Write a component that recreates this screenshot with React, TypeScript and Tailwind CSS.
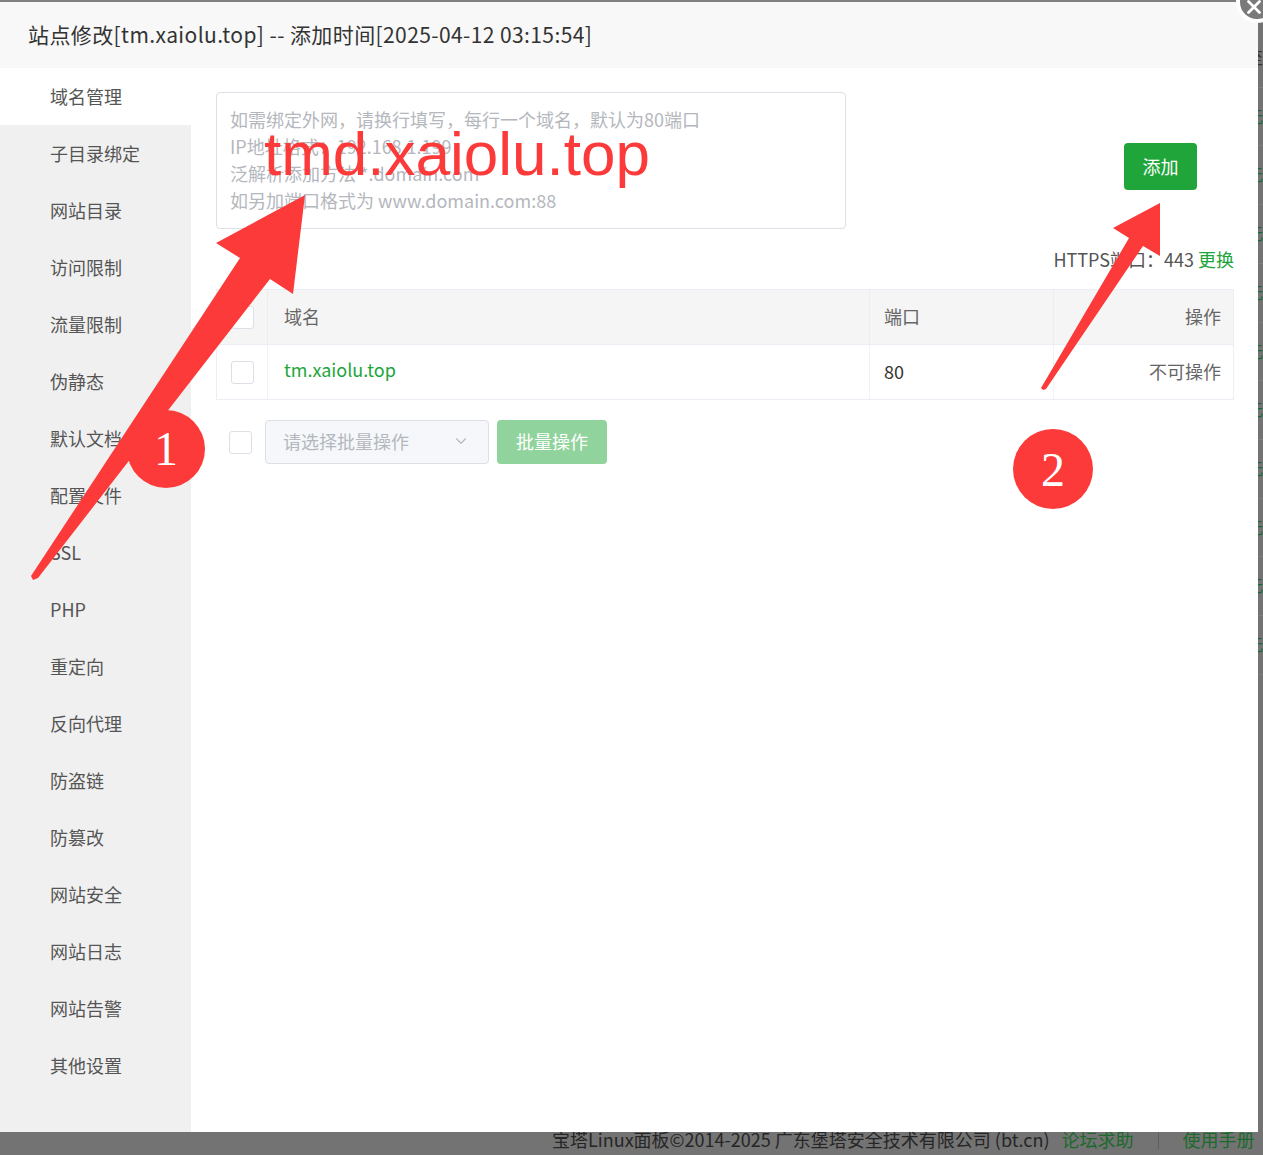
import React from "react";
import { ChevronDown, X } from "lucide-react";

const menu = [
  "域名管理",
  "子目录绑定",
  "网站目录",
  "访问限制",
  "流量限制",
  "伪静态",
  "默认文档",
  "配置文件",
  "SSL",
  "PHP",
  "重定向",
  "反向代理",
  "防盗链",
  "防篡改",
  "网站安全",
  "网站日志",
  "网站告警",
  "其他设置",
];

const hints = [
  "如需绑定外网，请换行填写，每行一个域名，默认为80端口",
  "IP地址格式：192.168.1.199",
  "泛解析添加方法 *.domain.com",
  "如另加端口格式为 www.domain.com:88",
];

const Checkbox = () => (
  <div className="h-[23px] w-[23px] shrink-0 rounded-[3px] border border-[#dcdfe6] bg-white" />
);

const Annotations = () => (
  <svg
    className="pointer-events-none absolute left-0 top-0"
    width="1263"
    height="1155"
    viewBox="0 0 1263 1155"
  >
    {/* arrow 1 */}
    <polygon
      points="33,580 38,578 270,279 293,294 305,195 216,243 240,258 31,576"
      fill="#fc3a3a"
    />
    {/* arrow 2 */}
    <polygon
      points="1043,390 1046,389 1143,246 1160,256 1160,203 1113,228 1129,238 1041,388"
      fill="#fc3a3a"
    />
    <circle cx="166" cy="449" r="39" fill="#fc3a3a" />
    <circle cx="1053" cy="469" r="40" fill="#fc3a3a" />
    <text
      x="166"
      y="465"
      textAnchor="middle"
      fontFamily="'Liberation Serif', serif"
      fontSize="48"
      fill="#fff"
    >
      1
    </text>
    <text
      x="1053"
      y="486"
      textAnchor="middle"
      fontFamily="'Liberation Serif', serif"
      fontSize="48"
      fill="#fff"
    >
      2
    </text>
    <text
      x="264"
      y="175"
      fontFamily="'Liberation Sans', Arial, sans-serif"
      fontSize="62"
      fill="#fc3a3a"
    >
      tmd.xaiolu.top
    </text>
  </svg>
);

export default function App() {
  return (
    <div className="relative h-[1155px] w-[1263px] overflow-hidden bg-[#737373] font-['Noto_Sans_CJK_SC',sans-serif]">
      {/* page behind the overlay */}
      <div className="flex h-full flex-col">
        <div className="h-[2px] bg-[#808080]" />
        <div className="flex flex-1">
          <div className="w-[1259px]" />
          <div className="flex flex-col pt-[27px] text-[16px] leading-[57.7px]">
            <div className="border-b border-[#7e7e7e] text-[#333]">至</div>
            {Array.from({ length: 10 }).map((_, i) => (
              <div key={i} className="border-b border-[#7e7e7e] text-[#1a6a2c]">
                无
              </div>
            ))}
          </div>
        </div>
        <div className="flex items-center pb-[4px] pl-[552px] text-[18px] leading-[23px] text-[#262626]">
          <span>宝塔Linux面板©2014-2025 广东堡塔安全技术有限公司 (bt.cn)</span>
          <span className="ml-[12px] text-[#1a6a2c]">论坛求助</span>
          <span className="mx-[24px] h-[18px] w-px bg-[#5e5e5e]" />
          <span className="text-[#1a6a2c]">使用手册</span>
        </div>
      </div>

      {/* modal */}
      <div className="absolute left-0 top-[2px] flex h-[1130px] w-[1258px] flex-col bg-white">
        <div className="flex h-[66px] items-center bg-[#f8f8f8] pl-[28px] text-[21px] tracking-[0.4px] text-[#333]">
          站点修改[tm.xaiolu.top] -- 添加时间[2025-04-12 03:15:54]
        </div>
        <div className="flex flex-1">
          <div className="w-[191px] bg-[#f0f0f0]">
            {menu.map((m, i) => (
              <div
                key={m}
                className={
                  "flex h-[57px] items-center pb-[1px] pl-[50px] text-[18px] text-[#555] " +
                  (i === 0 ? "bg-white" : "")
                }
              >
                {m}
              </div>
            ))}
          </div>

          <div className="flex-1 pl-[25px] pr-[24px] pt-[24px]">
            <div className="flex items-start">
              <div className="h-[137px] w-[630px] rounded-[4px] border border-[#dcdfe6] px-[13px] py-[13px] text-[18px] leading-[27px] text-[#b4b7bd]">
                {hints.map((h) => (
                  <div key={h}>{h}</div>
                ))}
              </div>
              <button className="ml-[278px] mt-[51px] h-[47px] w-[73px] rounded-[4px] bg-[#20a53a] text-[18px] text-white">
                添加
              </button>
            </div>

            <div className="mt-[17px] text-right text-[18px] leading-[27px] text-[#555]">
              HTTPS端口：443 <span className="text-[#20a53a]">更换</span>
            </div>

            <div className="mt-[16px] border border-[#ebeef5] text-[18px]">
              <div className="flex h-[54px] items-center bg-[#f5f5f5] text-[#666]">
                <div className="flex w-[50px] justify-center">
                  <Checkbox />
                </div>
                <div className="flex h-full w-[602px] items-center border-l border-[#ededed] pb-[2px] pl-[16px]">
                  域名
                </div>
                <div className="flex h-full w-[184px] items-center border-l border-[#ededed] pb-[2px] pl-[14px]">
                  端口
                </div>
                <div className="flex h-full flex-1 items-center justify-end border-l border-[#ededed] pb-[2px] pr-[12px]">
                  操作
                </div>
              </div>
              <div className="flex h-[55px] items-center border-t border-[#ebeef5]">
                <div className="flex w-[50px] justify-center">
                  <Checkbox />
                </div>
                <div className="flex h-full w-[602px] items-center border-l border-[#f2f2f2] pb-[6px] pl-[16px] text-[#20a53a]">
                  tm.xaiolu.top
                </div>
                <div className="flex h-full w-[184px] items-center border-l border-[#f2f2f2] pb-[2px] pl-[14px] text-[#333]">
                  80
                </div>
                <div className="flex h-full flex-1 items-center justify-end border-l border-[#f2f2f2] pb-[2px] pr-[12px] text-[#666]">
                  不可操作
                </div>
              </div>
            </div>

            <div className="mt-[20px] flex items-center pl-[13px] text-[18px]">
              <Checkbox />
              <div className="ml-[13px] flex h-[44px] w-[224px] items-center justify-between rounded-[4px] border border-[#dcdfe6] bg-[#f5f7fa] pb-[2px] pl-[17px] pr-[18px] text-[#b4b7bd]">
                <span>请选择批量操作</span>
                <ChevronDown size={18} strokeWidth={1.5} />
              </div>
              <button className="ml-[8px] h-[44px] w-[110px] rounded-[4px] bg-[#91d39c] pb-[2px] text-white">
                批量操作
              </button>
            </div>
          </div>
        </div>
      </div>

      {/* close button */}
      <div className="absolute left-[1236px] top-[-19px] flex h-[42px] w-[42px] items-center justify-center rounded-full border-[4px] border-white bg-[#7a7a7a] text-white">
        <X size={22} strokeWidth={3} className="mt-[10px] ml-[-6px]" />
      </div>

      <Annotations />
    </div>
  );
}
